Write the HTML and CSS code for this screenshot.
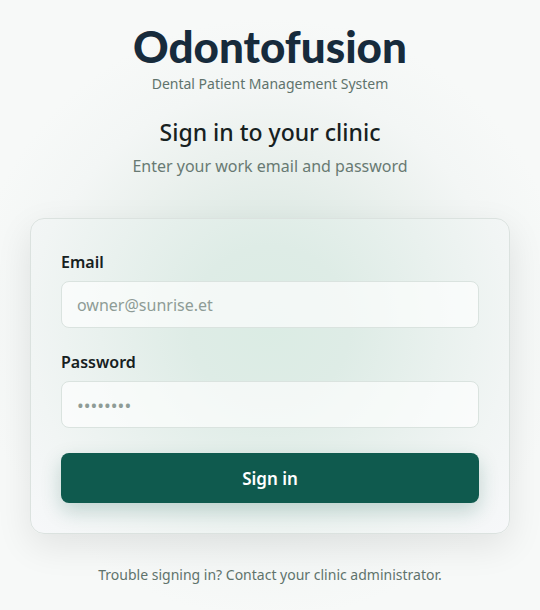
FILE: index.html
```html
<!DOCTYPE html>
<html lang="en">
<head>
  <meta charset="utf-8">
  <meta name="viewport" content="width=device-width, initial-scale=1">
  <title>Sign in – Odontofusion</title>
  <link rel="stylesheet" href="styles.css">
</head>
<body>
  <main class="page">
    <header class="brand">
      <p class="wordmark">Odontofusion</p>
      <p class="tagline">Dental Patient Management System</p>
    </header>
    <div class="intro">
      <h1 class="title">Sign in to your clinic</h1>
      <p class="subtitle">Enter your work email and password</p>
    </div>
    <form class="card">
      <div class="field">
        <label class="label" for="email">Email</label>
        <input class="input" id="email" type="email" placeholder="owner@sunrise.et">
      </div>
      <div class="field">
        <label class="label" for="password">Password</label>
        <input class="input input-password" id="password" type="password" placeholder="••••••••">
      </div>
      <button class="submit" type="submit">Sign in</button>
    </form>
    <p class="help">Trouble signing in? Contact your clinic administrator.</p>
  </main>
</body>
</html>
```

FILE: styles.css
```css
*,
*::before,
*::after {
  box-sizing: border-box;
}

body {
  margin: 0;
  min-height: 100vh;
  color: #17211f;
  font-family: "Noto Sans", "Open Sans", sans-serif;
  background: radial-gradient(circle at 50% 52%, #d8e9e0 0, #e0ebe6 100px, #ebf1ee 170px, #f3f6f5 230px, #f7f9f8 300px);
}

p,
h1 {
  margin: 0;
}

.page {
  max-width: 540px;
  margin: 0 auto;
  padding: 20px 30px 24px;
  text-align: center;
}

.wordmark {
  color: #172b3c;
  font-family: Lato, sans-serif;
  font-size: 44px;
  font-weight: 900;
  line-height: 52px;
}

.tagline,
.help {
  color: #60736c;
  font-size: 14px;
  line-height: 24px;
}

.intro {
  margin-top: 20px;
}

.title {
  font-size: 23px;
  font-weight: 500;
  line-height: 32px;
}

.subtitle {
  margin-top: 4px;
  color: #687a73;
  font-size: 16px;
  line-height: 28px;
}

.card {
  display: flex;
  flex-direction: column;
  gap: 21px;
  margin: 38px 0 29px;
  padding: 30px;
  text-align: left;
  background: radial-gradient(circle at 50% 34%, #dbece4 0, #deece6 80px, #e9f1ee 170px, #f1f5f4 240px, #f7f8fa 320px);
  border: 1px solid #dbe2df;
  border-radius: 14px;
  box-shadow: 0 12px 36px rgba(0, 0, 0, 0.09);
}

.field {
  display: flex;
  flex-direction: column;
  gap: 5px;
}

.label {
  font-size: 16px;
  font-weight: 600;
  line-height: 27px;
}

.input {
  width: 100%;
  height: 47px;
  padding: 0 15px;
  color: #17211f;
  font: inherit;
  font-size: 16px;
  background: rgba(255, 255, 255, 0.65);
  border: 1px solid #dae3df;
  border-radius: 8px;
}

.input-password {
  font-size: 18px;
}

.input::placeholder {
  color: #8e9c96;
  opacity: 1;
}

.submit {
  height: 50px;
  margin-top: 4px;
  color: #fff;
  font: inherit;
  font-size: 17px;
  font-weight: 600;
  background: #0f5a4e;
  border: 0;
  border-radius: 8px;
  box-shadow: 0 8px 20px rgba(15, 90, 78, 0.22);
}
```
